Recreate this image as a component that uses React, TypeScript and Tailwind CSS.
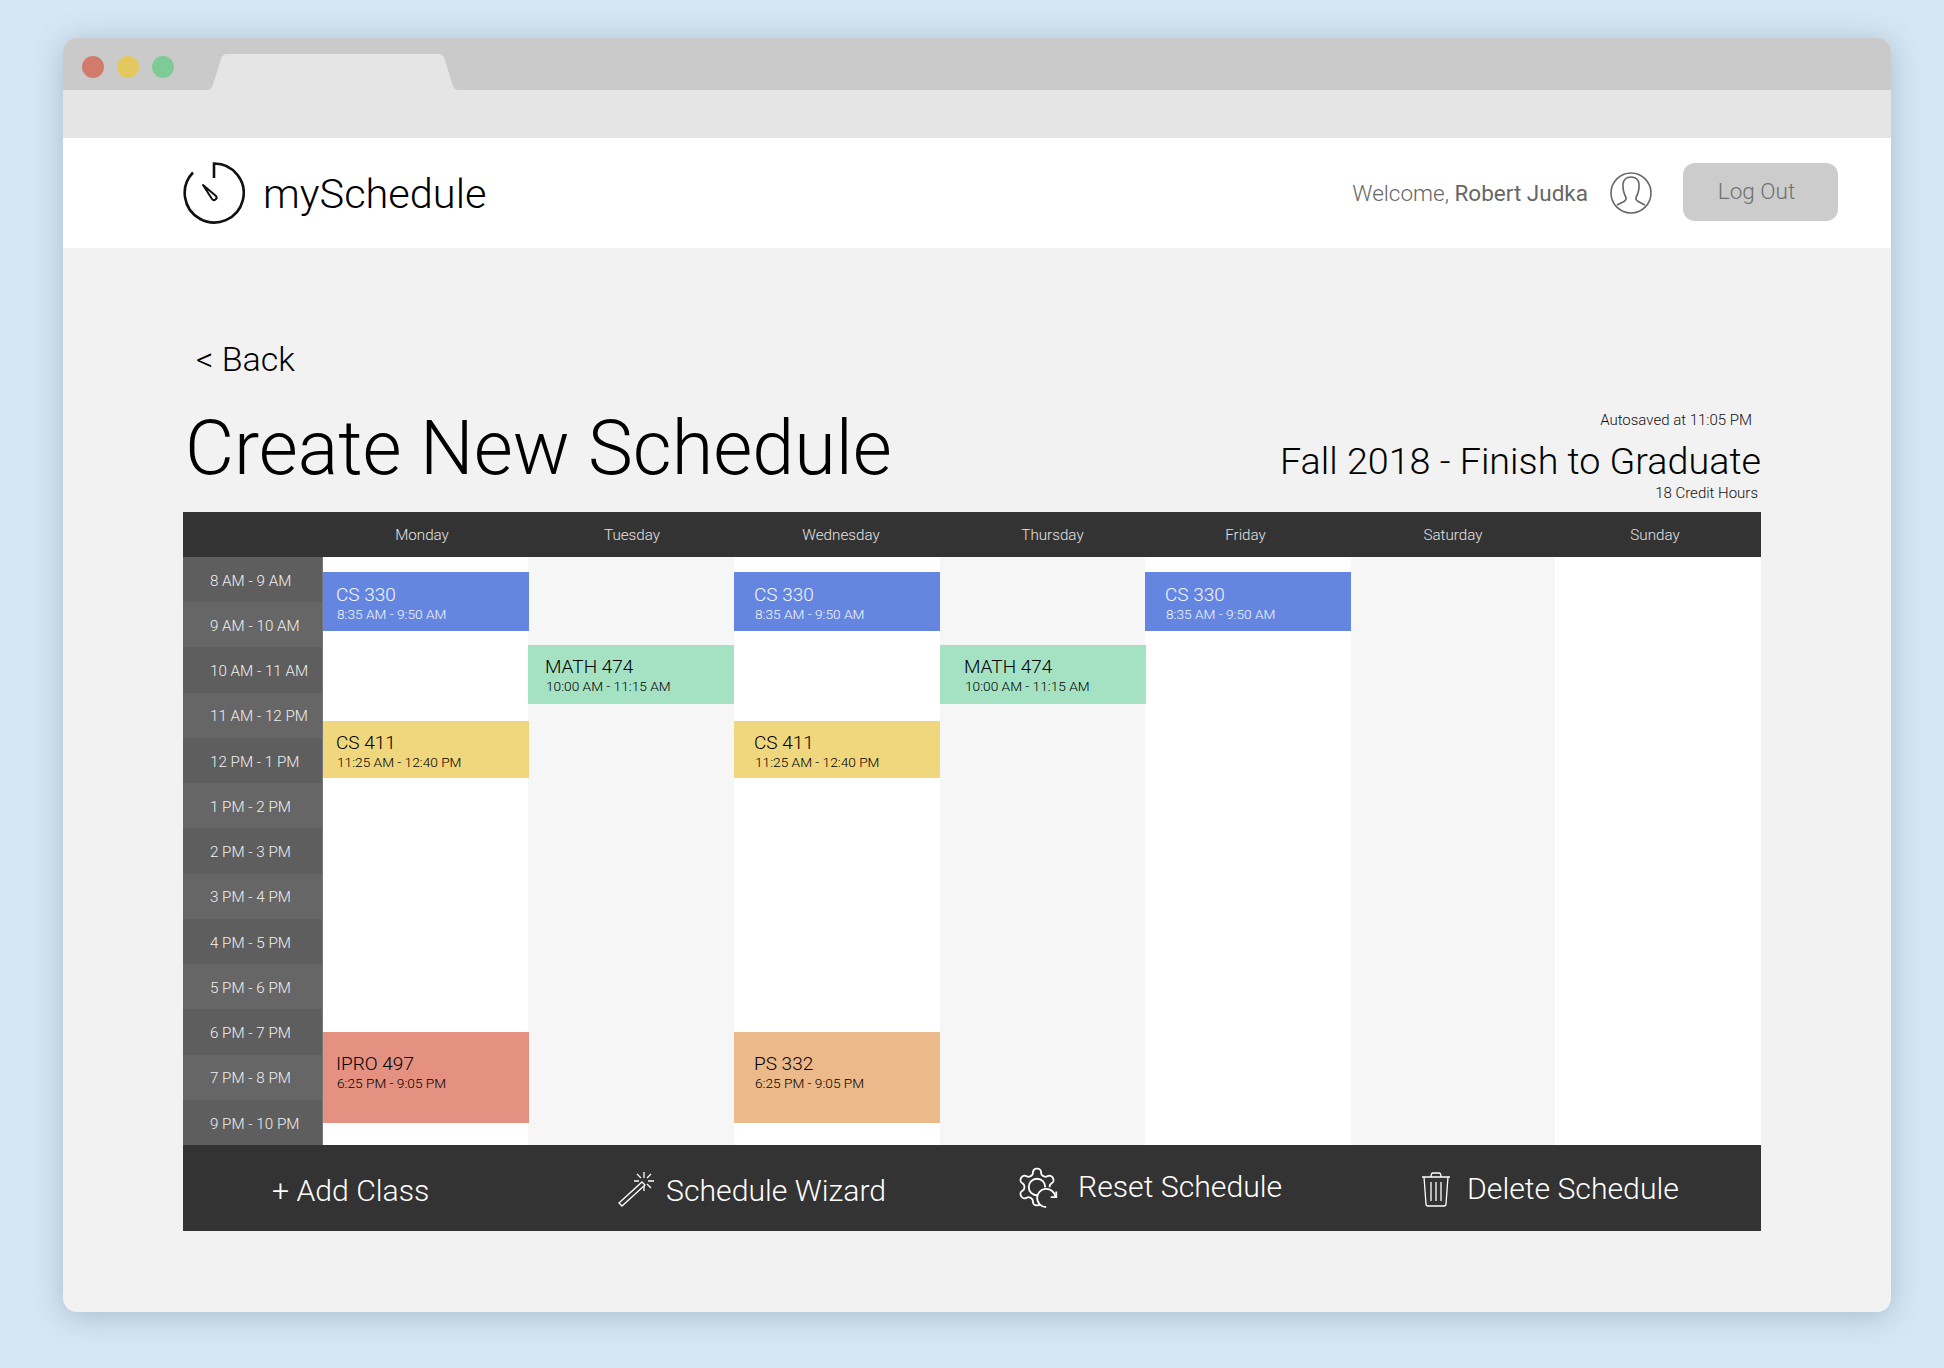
import React from "react";

const times = ["8 AM - 9 AM","9 AM - 10 AM","10 AM - 11 AM","11 AM - 12 PM","12 PM - 1 PM","1 PM - 2 PM","2 PM - 3 PM","3 PM - 4 PM","4 PM - 5 PM","5 PM - 6 PM","6 PM - 7 PM","7 PM - 8 PM","9 PM - 10 PM"];

function Event({ cls, name, time, color }: { cls: string; name: string; time: string; color: string }) {
  return (
    <div className={`relative z-10 flex flex-col ${cls} ${color}`}>
      <div className="text-[19px] leading-[23px] font-light">{name}</div>
      <div className="text-[13.7px] leading-[16px] font-light ml-[1px]">{time}</div>
    </div>
  );
}

function Column({ children, shade, width }: { children?: React.ReactNode; shade?: boolean; width: string }) {
  return <div className={`${width} shrink-0 flex flex-col ${shade ? "bg-[#f6f6f6]" : "bg-white"}`}>{children}</div>;
}

export default function App() {
  return (
    <div className="w-[1944px] h-[1368px] bg-[#d6e7f3] pt-[38px] pl-[63px] overflow-hidden" style={{ fontFamily: "Roboto, 'Liberation Sans', sans-serif" }}>
      <div className="w-[1828px] h-[1274px] rounded-[14px] bg-[#f2f2f2] overflow-hidden shadow-[0_4px_30px_rgba(60,90,120,0.3)] flex flex-col">
        {/* Tab bar */}
        <div className="h-[52px] bg-[#cacaca] flex items-start shrink-0">
          <div className="flex gap-[13px] ml-[19px] mt-[18px]">
            <div className="w-[22px] h-[22px] rounded-full bg-[#d27a6c]" />
            <div className="w-[22px] h-[22px] rounded-full bg-[#e3c85f]" />
            <div className="w-[22px] h-[22px] rounded-full bg-[#7ecb95]" />
          </div>
          <svg className="ml-[32px] mt-[16px]" width="254" height="36" viewBox="0 0 254 36">
            <path d="M0 36 H1 Q5 36 6.5 32 L15 5 Q16.5 0 21 0 H232 Q237 0 238.5 5 L247 32 Q248.5 36 253 36 H254 Z" fill="#e5e5e5" />
          </svg>
        </div>
        <div className="h-[48px] bg-[#e5e5e5] shrink-0" />
        {/* Header */}
        <div className="h-[110px] bg-white shrink-0 flex items-center pl-[120px] pr-[53px]">
          <svg width="62" height="62" viewBox="0 0 62 62" fill="none" stroke="#111" strokeWidth="2.6">
            <path d="M31 16 V1.5 A29.5 29.5 0 1 1 10 10.5" />
            <path d="M20 23 L33 34 A2.5 2.5 0 0 1 29 37 Z" strokeWidth="2" strokeLinejoin="round" />
          </svg>
          <div className="ml-[18px] mt-[2px] text-[41.5px] font-light text-black leading-none">mySchedule</div>
          <div className="ml-auto mt-[1px] text-[22.5px] text-[#666] font-light">
            Welcome, <span className="font-normal">Robert Judka</span>
          </div>
          <svg className="ml-[22px]" width="42" height="42" viewBox="0 0 42 42" fill="none" stroke="#666" strokeWidth="1.6">
            <circle cx="21" cy="21" r="20" />
            <path d="M7 33 L14 29.5 Q16.5 28 16 25.5 Q12.5 19 13 12 Q14 5 21 5 Q28 5 29 12 Q29.5 19 26 25.5 Q25.5 28 28 29.5 L35 33" />
          </svg>
          <div className="ml-[31px] -mt-[2px] w-[155px] h-[58px] rounded-[12px] bg-[#cccccc] text-[#707070] text-[22.5px] font-light flex items-center justify-center pr-[8px]">Log Out</div>
        </div>
        {/* Content */}
        <div className="flex-1 pl-[120px] pt-[92px] relative">
          <div className="text-[34px] leading-[38px] font-light text-black ml-[13px]">&lt; Back</div>
          <div className="flex w-[1578px] items-end justify-between h-[134px]">
            <div className="text-[75.5px] leading-[90px] font-light text-black mb-[19px] ml-[2px]">Create New Schedule</div>
            <div className="flex flex-col items-end mb-[10px]">
              <div className="text-[15px] leading-[18px] text-[#111] font-light mr-[9px] mb-[1px]">Autosaved at 11:05 PM</div>
              <div className="text-[37.7px] leading-[46px] font-light text-black mt-[8px]">Fall 2018 - Finish to Graduate</div>
              <div className="text-[15px] leading-[18px] text-[#111] font-light mr-[3px]">18 Credit Hours</div>
            </div>
          </div>
          {/* Calendar */}
          <div className="w-[1578px]">
            <div className="h-[45px] bg-[#333333] flex text-[#e4e4e4] text-[15.2px] font-light items-center pt-[2px]">
              <div className="w-[140px]" />
              <div className="w-[205px] text-center pr-[7px]">Monday</div>
              <div className="w-[206px] text-center pl-[2px]">Tuesday</div>
              <div className="w-[206px] text-center pl-[8px]">Wednesday</div>
              <div className="w-[205px] text-center pl-[20px]">Thursday</div>
              <div className="w-[206px] text-center pr-[5px]">Friday</div>
              <div className="w-[204px] text-center">Saturday</div>
              <div className="w-[206px] text-center pr-[6px]">Sunday</div>
            </div>
            <div className="h-[588px] flex">
              <div className="w-[140px] shrink-0 flex flex-col border-r border-[#777]">
                {times.map((t, i) => (
                  <div key={t} className={`flex-1 flex items-center pl-[27px] pt-[3px] text-[15.2px] font-light text-[#f0f0f0] ${i % 2 ? "bg-[#666666]" : "bg-[#5e5e5e]"}`}>{t}</div>
                ))}
              </div>
              <Column width="w-[205px]">
                <Event cls="mt-[15px] h-[59px] pl-[13px] pt-[11px] w-[206px]" name="CS 330" time="8:35 AM - 9:50 AM" color="bg-[#6486e0] text-[#f4f6fc]" />
                <Event cls="mt-[90px] h-[57px] pl-[13px] pt-[10px] w-[206px]" name="CS 411" time="11:25 AM - 12:40 PM" color="bg-[#f0d67c] text-black" />
                <Event cls="mt-[254px] h-[91px] pl-[13px] pt-[20px] w-[206px]" name="IPRO 497" time="6:25 PM - 9:05 PM" color="bg-[#e49182] text-black" />
              </Column>
              <Column width="w-[206px]" shade>
                <Event cls="mt-[88px] h-[59px] pl-[17px] pt-[10px] w-[206px]" name="MATH 474" time="10:00 AM - 11:15 AM" color="bg-[#a5e2c4] text-black" />
              </Column>
              <Column width="w-[206px]">
                <Event cls="mt-[15px] h-[59px] pl-[20px] pt-[11px] w-[206px]" name="CS 330" time="8:35 AM - 9:50 AM" color="bg-[#6486e0] text-[#f4f6fc]" />
                <Event cls="mt-[90px] h-[57px] pl-[20px] pt-[10px] w-[206px]" name="CS 411" time="11:25 AM - 12:40 PM" color="bg-[#f0d67c] text-black" />
                <Event cls="mt-[254px] h-[91px] pl-[20px] pt-[20px] w-[206px]" name="PS 332" time="6:25 PM - 9:05 PM" color="bg-[#ecb98a] text-black" />
              </Column>
              <Column width="w-[205px]" shade>
                <Event cls="mt-[88px] h-[59px] pl-[24px] pt-[10px] w-[206px]" name="MATH 474" time="10:00 AM - 11:15 AM" color="bg-[#a5e2c4] text-black" />
              </Column>
              <Column width="w-[206px]">
                <Event cls="mt-[15px] h-[59px] pl-[20px] pt-[11px] w-[206px]" name="CS 330" time="8:35 AM - 9:50 AM" color="bg-[#6486e0] text-[#f4f6fc]" />
              </Column>
              <Column width="w-[204px]" shade />
              <Column width="w-[206px]" />
            </div>
            {/* Actions */}
            <div className="h-[86px] bg-[#333333] flex items-center pt-[2px] text-white text-[30.2px] font-light whitespace-nowrap">
              <div className="ml-[89px] w-[346px] leading-none mt-[4px]">+ Add Class</div>
              <svg width="36" height="36" viewBox="0 0 36 36" fill="none" stroke="#fff" strokeWidth="1.3">
                <path d="M1 32 L24 11 L27 14 L4 35 Z" />
                <path d="M26 1 V7 M26 15 V20 M16 10 H21 M30 10 H36 M19 3 L23 7 M33 3 L29 7 M33 17 L29 13" />
              </svg>
              <div className="ml-[12px] leading-none mt-[4px] w-[349px]">Schedule Wizard</div>
              <svg width="44" height="44" viewBox="0 0 24 24" fill="none" stroke="#fff" strokeWidth="1" className="-mt-[4px]">
                <path d="M12.22 2h-.44a2 2 0 0 0-2 2v.18a2 2 0 0 1-1 1.73l-.43.25a2 2 0 0 1-2 0l-.15-.08a2 2 0 0 0-2.73.73l-.22.38a2 2 0 0 0 .73 2.73l.15.1a2 2 0 0 1 1 1.72v.51a2 2 0 0 1-1 1.74l-.15.09a2 2 0 0 0-.73 2.73l.22.38a2 2 0 0 0 2.73.73l.15-.08a2 2 0 0 1 2 0l.43.25a2 2 0 0 1 1 1.73V20a2 2 0 0 0 2 2h.44a2 2 0 0 0 2-2v-.18a2 2 0 0 1 1-1.73l.43-.25a2 2 0 0 1 2 0l.15.08a2 2 0 0 0 2.73-.73l.22-.39a2 2 0 0 0-.73-2.73l-.15-.08a2 2 0 0 1-1-1.74v-.5a2 2 0 0 1 1-1.74l.15-.09a2 2 0 0 0 .73-2.73l-.22-.38a2 2 0 0 0-2.73-.73l-.15.08a2 2 0 0 1-2 0l-.43-.25a2 2 0 0 1-1-1.73V4a2 2 0 0 0-2-2z" />
                <circle cx="12" cy="12" r="4.5" />
                <circle cx="18" cy="18" r="6" fill="#333" stroke="none" />
                <path d="M22 17.2 A5 5 0 1 0 17 23" />
                <path d="M22.5 14.5 V17.5 H19.5" />
              </svg>
              <div className="ml-[19px] leading-none -mt-[4px] w-[344px]">Reset Schedule</div>
              <svg width="30" height="36" viewBox="0 0 30 36" fill="none" stroke="#fff" strokeWidth="1.3" className="-ml-[1px]">
                <path d="M1 6 H29 M3 6 L5 33 Q5 35 7 35 H23 Q25 35 25 33 L27 6 M10 6 Q10 2 12 2 H18 Q20 2 20 6 M10 11 V30 M15 11 V30 M20 11 V30" />
              </svg>
              <div className="ml-[16px] leading-none">Delete Schedule</div>
            </div>
          </div>
        </div>
      </div>
    </div>
  );
}
